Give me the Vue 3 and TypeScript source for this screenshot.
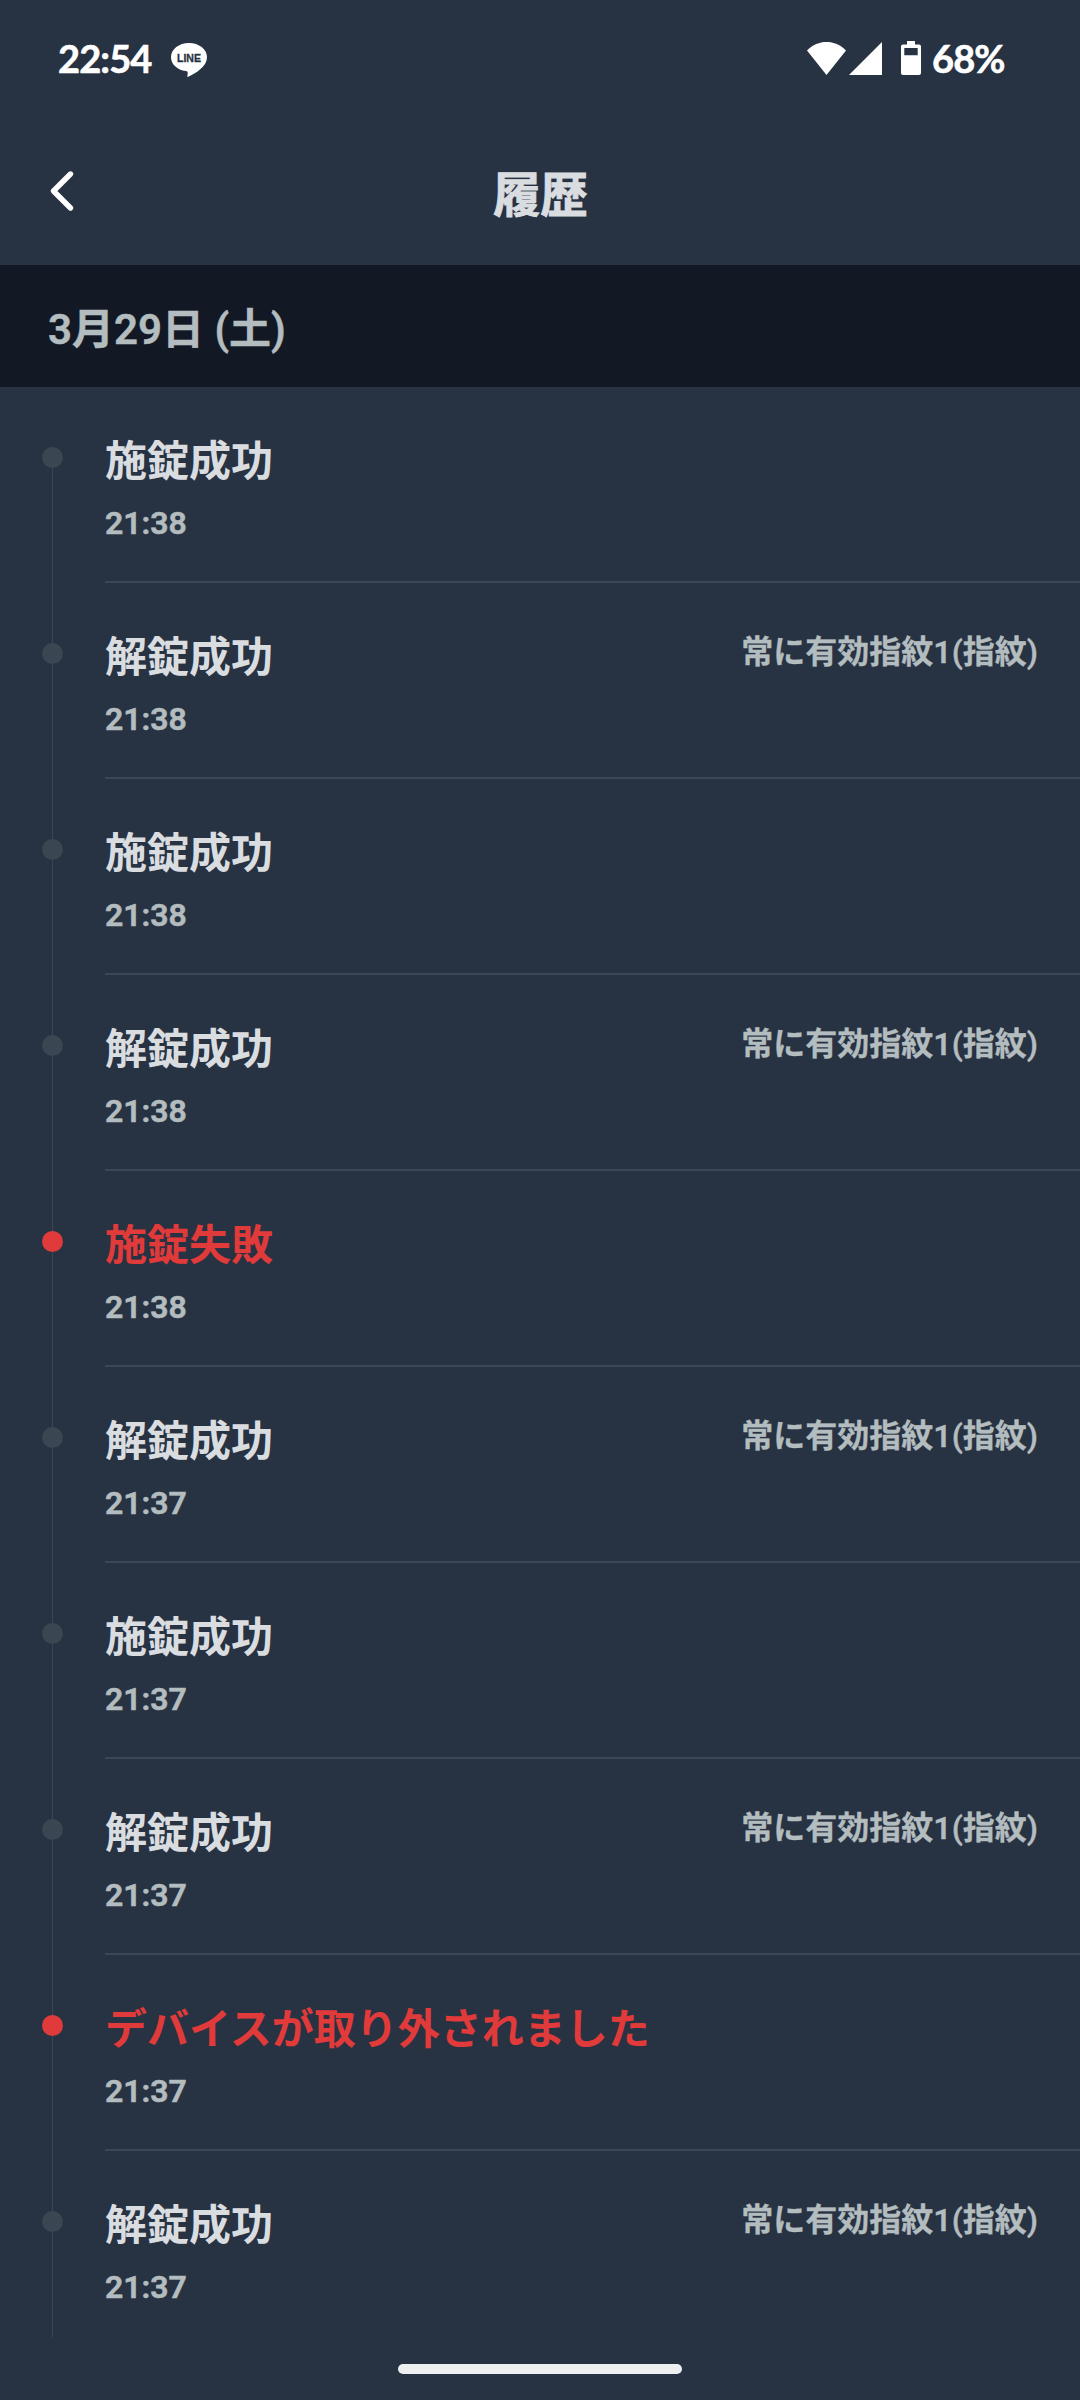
<script setup lang="ts">
interface Entry {
  title: string
  time: string
  method?: string
  alert?: boolean
}

const fingerprint = '常に有効指紋1(指紋)'

const entries: Entry[] = [
  { title: '施錠成功', time: '21:38' },
  { title: '解錠成功', time: '21:38', method: fingerprint },
  { title: '施錠成功', time: '21:38' },
  { title: '解錠成功', time: '21:38', method: fingerprint },
  { title: '施錠失敗', time: '21:38', alert: true },
  { title: '解錠成功', time: '21:37', method: fingerprint },
  { title: '施錠成功', time: '21:37' },
  { title: '解錠成功', time: '21:37', method: fingerprint },
  { title: 'デバイスが取り外されました', time: '21:37', alert: true },
  { title: '解錠成功', time: '21:37', method: fingerprint },
]
</script>

<template>
  <div class="screen">
    <div class="status">
      <span class="clock">22:54</span>
      <svg class="line-app" width="38" height="36" viewBox="0 0 38 36">
        <path d="M19 1C9 1 1 7.2 1 15.2c0 7 6.200 12.700 14.800 13.900 1.800.3 2.200 1.200 1.800 3.400l-.3 1.800c-.1.600.3.800.9.500C26 31 37 24.500 37 15.200 37 7.200 29 1 19 1z" fill="#fff" />
        <text x="19" y="19.800" text-anchor="middle" textLength="24" lengthAdjust="spacingAndGlyphs">LINE</text>
      </svg>
      <div class="indicators">
        <svg width="76" height="36" viewBox="0 0 76 36">
          <path d="M0 10.500C5.500 4.600 12.500 2 19.500 2S33.500 4.600 39 10.500L19.500 35z" fill="#fff" />
          <path d="M75 2v33H42z" fill="#fff" />
        </svg>
        <svg class="battery" width="20" height="36" viewBox="0 0 20 36">
          <path fill-rule="evenodd" d="M6 1h8v3.500h4a2 2 0 0 1 2 2V33a2 2 0 0 1-2 2H2a2 2 0 0 1-2-2V6.500a2 2 0 0 1 2-2h4zM3.300 8v7.300h13.400V8z" fill="#fff" />
        </svg>
        <span class="percent">68%</span>
      </div>
    </div>

    <header class="header">
      <svg class="back" width="26" height="42" viewBox="0 0 26 42">
        <path d="M21.500 4L4.500 21l17 17" fill="none" stroke="#fff" stroke-width="5.400" stroke-linecap="round" stroke-linejoin="round" />
      </svg>
      <h1>履歴</h1>
    </header>

    <div class="date">3月29日 (土)</div>

    <ul class="list">
      <li v-for="(entry, i) in entries" :key="i" class="row" :class="{ alert: entry.alert }">
        <div class="rail"><i class="dot"></i></div>
        <div class="body">
          <div class="main">
            <div class="title">{{ entry.title }}</div>
            <div class="time">{{ entry.time }}</div>
          </div>
          <div v-if="entry.method" class="method">{{ entry.method }}</div>
        </div>
      </li>
    </ul>

    <div class="nav"><div class="handle"></div></div>
  </div>
</template>

<style>
body {
  margin: 0;
  background: #273242;
}
</style>

<style scoped>
.screen {
  display: flex;
  flex-direction: column;
  width: 1080px;
  height: 2400px;
  overflow: hidden;
  background: #273242;
  color: #dadde0;
  font-family: Roboto, "Noto Sans CJK JP", sans-serif;
  font-weight: 600;
}
.status {
  display: flex;
  align-items: flex-start;
  box-sizing: border-box;
  height: 118px;
  padding: 35px 74px 0 58px;
  color: #fff;
  font-family: Lato, sans-serif;
  font-size: 38px;
  font-weight: 700;
  line-height: 46px;
}
.clock,
.percent {
  letter-spacing: -0.9px;
  -webkit-text-stroke: 0.6px #fff;
}
.clock {
  width: 112px;
}
.line-app {
  margin-top: 7px;
}
.line-app text {
  font: 700 11.500px "Liberation Sans", sans-serif;
  fill: #273242;
  stroke: #273242;
  stroke-width: 0.3px;
}
.indicators {
  display: flex;
  margin-left: auto;
}
.indicators svg {
  margin-top: 5px;
}
.battery {
  margin-left: 18px;
}
.percent {
  width: 74px;
  margin-left: 11px;
  white-space: nowrap;
}
.header {
  display: grid;
  grid-template-columns: 49px 26px 1fr 74px;
  height: 147px;
}
.back {
  grid-column: 2;
  margin-top: 52px;
}
h1 {
  margin: 50px 0 0;
  font: 700 47.250px/48px "Noto Sans CJK JP", sans-serif;
  text-align: center;
  -webkit-text-stroke: 1px #dadde0;
}
.date {
  box-sizing: border-box;
  height: 122px;
  padding: 4px 48px 0;
  background: #121924;
  color: #b3bcbf;
  font-size: 42px;
  line-height: 122px;
  -webkit-text-stroke: 0.5px #b3bcbf;
}
.list {
  height: 1950px;
  margin: 0;
  padding: 0;
  overflow: hidden;
  list-style: none;
}
.row {
  display: flex;
  height: 196px;
}
.rail {
  display: flex;
  justify-content: center;
  width: 105px;
  box-sizing: border-box;
  padding-top: 60px;
  background: linear-gradient(#3b4653, #3b4653) 52px 0 / 1px 100% no-repeat;
}
.row:first-child .rail {
  background-position: 52px 70px;
}
.dot {
  width: 21px;
  height: 21px;
  border-radius: 50%;
  background: #3b4653;
}
.body {
  display: flex;
  flex: 1;
  justify-content: space-between;
  box-sizing: border-box;
  padding-right: 42px;
  border-bottom: 2px solid #3b4656;
}
.title {
  margin-top: 50px;
  font: 700 42px/42px "Noto Sans CJK JP", sans-serif;
}
.time,
.method {
  color: #b3bcbf;
  font-size: 32px;
  line-height: 36px;
}
.time {
  margin-top: 26px;
  -webkit-text-stroke: 0.6px #b3bcbf;
}
.method {
  margin-top: 51px;
  -webkit-text-stroke: 0.3px #b3bcbf;
}
.alert .dot {
  background: #e13a3a;
}
.alert .title {
  color: #e13a3a;
}
.nav {
  display: flex;
  justify-content: center;
  padding-top: 27px;
}
.handle {
  width: 284px;
  height: 10px;
  border-radius: 5px;
  background: #eeeff1;
}
</style>
